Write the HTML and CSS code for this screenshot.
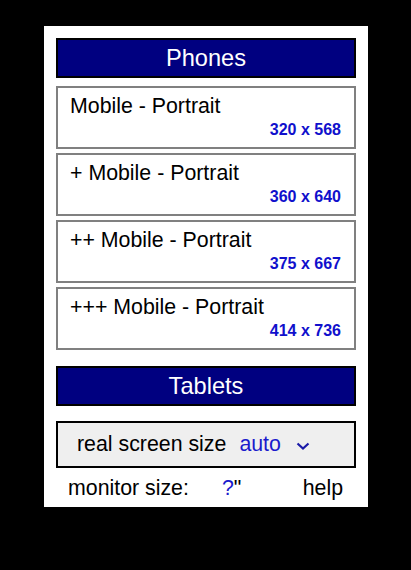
FILE: index.html
```html
<!DOCTYPE html>
<html>
<head>
<meta charset="utf-8">
<link rel="stylesheet" href="styles.css">
</head>
<body>
<div class="panel">
  <div class="group-header">Phones</div>
  <div class="devices">
    <div class="device">
      <div class="device-name">Mobile - Portrait</div>
      <div class="device-size">320 x 568</div>
    </div>
    <div class="device">
      <div class="device-name">+ Mobile - Portrait</div>
      <div class="device-size">360 x 640</div>
    </div>
    <div class="device">
      <div class="device-name">++ Mobile - Portrait</div>
      <div class="device-size">375 x 667</div>
    </div>
    <div class="device">
      <div class="device-name">+++ Mobile - Portrait</div>
      <div class="device-size">414 x 736</div>
    </div>
  </div>
  <div class="group-header tablets">Tablets</div>
  <div class="screen-select">
    <span class="select-label">real screen size</span>
    <span class="select-value">auto</span>
    <svg class="chevron" width="14" height="8" viewBox="0 0 14 8"><polyline points="1.5,1.5 7,6.5 12.5,1.5" fill="none" stroke="#1a1aa8" stroke-width="2.2"/></svg>
  </div>
  <div class="monitor-row">
    <span class="monitor-label">monitor size:</span>
    <span class="monitor-value"><span class="q">?</span>"</span>
    <span class="help">help</span>
  </div>
</div>
</body>
</html>
```

FILE: styles.css
```css
html, body {
  margin: 0;
  padding: 0;
  background: #000;
}
body {
  font-family: "Liberation Sans", Arial, sans-serif;
  width: 411px;
  height: 570px;
  overflow: hidden;
}
.panel {
  margin: 26px 0 0 44px;
  width: 324px;
  box-sizing: border-box;
  padding: 12px 12px 6px 12px;
  background: #fff;
}
.group-header {
  box-sizing: border-box;
  height: 40px;
  border: 2px solid #000;
  background: #000080;
  color: #fff;
  font-size: 23.6px;
  line-height: 36px;
  text-align: center;
}
.devices {
  display: flex;
  flex-direction: column;
  gap: 4px;
  margin-top: 8px;
}
.device {
  box-sizing: border-box;
  height: 63px;
  border: 2px solid #808080;
  padding: 6px 13px 0 12px;
}
.device-name {
  font-size: 21.33px;
  line-height: 25px;
  color: #000;
}
.device-size {
  margin-top: 2px;
  font-size: 16px;
  font-weight: bold;
  line-height: 18px;
  color: #1010cc;
  text-align: right;
}
.tablets {
  margin-top: 16px;
}
.screen-select {
  box-sizing: border-box;
  height: 47px;
  margin-top: 15px;
  border: 2px solid #000;
  background: #efefef;
  display: flex;
  align-items: center;
  padding-left: 19px;
  font-size: 21.33px;
}
.select-label {
  color: #000;
}
.select-value {
  margin-left: 13px;
  color: #1a1acc;
}
.chevron {
  margin-left: 15px;
  margin-top: 2px;
}
.monitor-row {
  display: flex;
  margin-top: 8px;
  padding: 0 13px 0 12px;
  font-size: 21.33px;
  line-height: 25px;
  color: #000;
}
.monitor-value {
  margin-left: 33px;
}
.q {
  color: #1a1acc;
}
.help {
  margin-left: auto;
}
```
